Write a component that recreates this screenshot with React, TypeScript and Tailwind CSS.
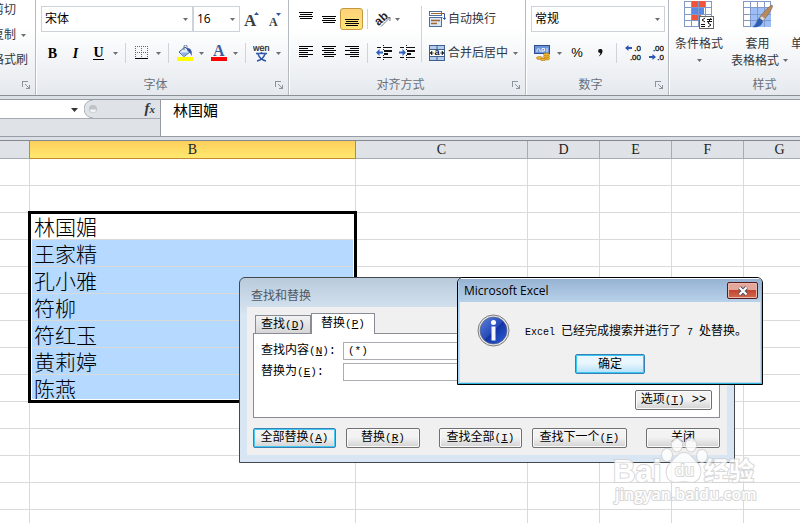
import React from "react";

const sans = "font-['Open_Sans','Noto_Sans_CJK_SC',sans-serif]";
const song = "font-['Liberation_Mono','Noto_Sans_CJK_SC',monospace]";

function Caret() {
  return (
    <svg width="5" height="3" viewBox="0 0 5 3" aria-hidden="true">
      <path d="M0 0h5L2.500 3z" fill="#6b6f75" />
    </svg>
  );
}

function ArrowButton({ label }: { label: string }) {
  return (
    <button aria-label={label} className="flex h-6 w-[11px] items-center justify-center">
      <Caret />
    </button>
  );
}

function Tool({ label, children }: { label: string; children: React.ReactNode }) {
  return (
    <button aria-label={label} className="flex h-6 w-[23px] shrink-0 items-center justify-center">
      {children}
    </button>
  );
}

function Sep() {
  return <span className="mx-1 h-5 w-px shrink-0 bg-[#d0d4da]" />;
}

function Combo({ label, value, width }: { label: string; value: string; width: string }) {
  return (
    <span className={"relative block " + width}>
      <select
        aria-label={label}
        defaultValue={value}
        className="h-[26px] w-full appearance-none border border-[#ced3d9] bg-white px-[3px] text-[12px] leading-6 text-black"
      >
        <option>{value}</option>
      </select>
      <span className="pointer-events-none absolute top-0 right-[5px] flex h-full items-center">
        <Caret />
      </span>
    </span>
  );
}

function Launcher({ label }: { label: string }) {
  return (
    <button aria-label={label} className="flex w-[18px] justify-center">
      <svg width="8" height="8" viewBox="0 0 8 8" fill="none" stroke="#8d939b" shapeRendering="crispEdges">
        <path d="M.5 6V.5H6M3 3l4 4M7.500 3.500v4h-4" />
      </svg>
    </button>
  );
}

function Group({
  title,
  className,
  launcher = true,
  children,
}: {
  title: string;
  className: string;
  launcher?: boolean;
  children: React.ReactNode;
}) {
  return (
    <section className={"flex shrink-0 flex-col border-r border-[#b5bac1] shadow-[1px_0_0_#ffffff] " + className}>
      <div className="h-[75px]">{children}</div>
      <div className="flex h-5 items-center text-[12px] leading-5 text-[#6a7079]">
        <span className="flex-1 text-center">{title}</span>
        {launcher && <Launcher label={title + "设置"} />}
      </div>
    </section>
  );
}

function Lines({ rows }: { rows: [number, number, number][] }) {
  return (
    <svg width="14" height="16" viewBox="0 0 14 16" shapeRendering="crispEdges">
      {rows.map(([x, y, w]) => (
        <rect key={y} x={x} y={y} width={w} height="1" fill="#000" />
      ))}
    </svg>
  );
}

function Indent({ flip }: { flip?: boolean }) {
  return (
    <svg width="16" height="16" viewBox="0 0 16 16" shapeRendering="crispEdges">
      <g fill="#111">
        <rect x="1" y="2" width="4" height="1" />
        <rect x="7" y="2" width="9" height="1" />
        <rect x="8" y="5" width="8" height="2" />
        <rect x="8" y="8" width="4" height="2" />
        <rect x="1" y="12" width="4" height="1" />
        <rect x="7" y="12" width="9" height="1" />
        <rect x="7" y="0" width="1" height="1" />
        <rect x="7" y="4" width="1" height="1" />
        <rect x="7" y="10" width="1" height="1" />
        <rect x="7" y="14" width="1" height="1" />
      </g>
      <path d={flip ? "M7 7.500L3.500 4v2.500H0v2h3.500V11z" : "M0 7.500L3.500 4v2.500H7v2H3.500V11z"} fill="#2f62c0" shapeRendering="auto" />
    </svg>
  );
}

function DecimalIcon({ more }: { more?: boolean }) {
  return (
    <svg width="16" height="18" viewBox="0 0 16 18">
      <g fontFamily="Liberation Sans, sans-serif" fontSize="8" fill="#111" stroke="#111" strokeWidth=".3">
        <text x="16" y="7" textAnchor="end">{more ? ".0" : ".00"}</text>
        <text x="16" y="16" textAnchor="end">{more ? ".00" : ".0"}</text>
      </g>
      {more ? (
        <path d="M0 4l3.500-3v2H7v2H3.500v2z" fill="#2b55b5" />
      ) : (
        <path d="M8 13l-3.500-3v2H1v2h3.500v2z" fill="#2b55b5" />
      )}
    </svg>
  );
}

function GridLines() {
  return <path d="M7.500 0v26M14.500 0v26M21.500 0v26M0 6.500h28M0 13.500h28M0 19.500h28" stroke="#8199c6" fill="none" />;
}

function Ribbon() {
  return (
    <header className="flex h-24 shrink-0 overflow-hidden border-b border-[#8b9097] bg-linear-to-b from-white from-30% to-[#e5e9ee] text-[12px] text-[#33373d]">
      <section className="flex w-9 shrink-0 flex-col border-r border-[#b5bac1] shadow-[1px_0_0_#ffffff]">
        <div className="-ml-2 flex h-[75px] flex-col items-start justify-between pt-[2px] pb-[7px] leading-4 whitespace-nowrap">
          <button>剪切</button>
          <button className="flex items-center gap-[5px]">
            复制 <Caret />
          </button>
          <button>格式刷</button>
        </div>
        <div className="flex h-5 items-center justify-end">
          <Launcher label="剪贴板设置" />
        </div>
      </section>

      <Group title="字体" className="w-[253px] pl-[5px]">
        <div className="flex flex-col gap-2 pt-[6px]">
          <div className="flex items-center">
            <Combo label="字体" value="宋体" width="w-[152px]" />
            <Combo label="字号" value="16" width="w-[47px]" />
            <Tool label="增大字号">
              <svg width="16" height="18" viewBox="0 0 16 18">
                <text x="0" y="16" fontFamily="Liberation Serif, serif" fontWeight="bold" fontSize="17" fill="#3b3f45">A</text>
                <path d="M10 5l2.500-3L15 5z" fill="#2f55a4" />
              </svg>
            </Tool>
            <Tool label="减小字号">
              <svg width="16" height="18" viewBox="0 0 16 18">
                <text x="2" y="16" fontFamily="Liberation Serif, serif" fontWeight="bold" fontSize="12" fill="#3b3f45">A</text>
                <path d="M9 3l2.500 3L14 3z" fill="#2f55a4" />
              </svg>
            </Tool>
          </div>
          <div className="flex h-[26px] items-center font-['Liberation_Serif',serif] text-[14px] text-black">
            <Tool label="加粗"><b>B</b></Tool>
            <Tool label="倾斜"><i className="font-bold">I</i></Tool>
            <Tool label="下划线"><b className="border-b border-black leading-[13px]">U</b></Tool>
            <ArrowButton label="下划线选项" />
            <Sep />
            <Tool label="边框">
              <svg width="14" height="14" viewBox="0 0 14 14" shapeRendering="crispEdges">
                <path d="M.5 0v12M6.500 0v12M12.500 0v12M0 .5h13M0 6.500h13" stroke="#666" strokeDasharray="1 1" fill="none" />
                <path d="M0 12.500h13" stroke="#000" />
              </svg>
            </Tool>
            <ArrowButton label="边框选项" />
            <Sep />
            <Tool label="填充颜色">
              <svg width="16" height="16" viewBox="0 0 16 16">
                <path d="M2 7l6-5 5 5-6 4.500z" fill="#dfe9f8" stroke="#3d5c98" />
                <path d="M7 5V1.500a1.500 1.500 0 0 1 3 0V4" fill="none" stroke="#5c6f92" />
                <path d="M4 7.500h8L7 11z" fill="#8fb2e6" />
                <path d="M10 3c4 0 5.500 3 4.500 8-1-2-1-4-4-5z" fill="#2f55a4" />
                <path d="M0 12h16v4H0z" fill="#ffff00" />
              </svg>
            </Tool>
            <ArrowButton label="填充颜色选项" />
            <Tool label="字体颜色">
              <svg width="16" height="16" viewBox="0 0 16 16">
                <text x="2" y="11" fontFamily="Liberation Serif, serif" fontWeight="bold" fontSize="16" fill="#3c5c9c">A</text>
                <path d="M0 12h16v4H0z" fill="#ff0000" />
              </svg>
            </Tool>
            <ArrowButton label="字体颜色选项" />
            <Sep />
            <Tool label="拼音指南">
              <svg width="17" height="17" viewBox="0 0 17 17">
                <text x="0" y="6" fontFamily="Liberation Sans, sans-serif" fontSize="9" fill="#222" stroke="#222" strokeWidth=".2">wén</text>
                <path d="M3 8.500h11M8.500 7v2M5 9c1 3 4 6 8 7M12 9c-1 3-4 6-8 7" stroke="#3157a8" strokeWidth="1.500" fill="none" />
              </svg>
            </Tool>
            <ArrowButton label="拼音指南选项" />
          </div>
        </div>
      </Group>

      <Group title="对齐方式" className="w-[237px] pl-[5px]">
        <div className="flex pt-[6px]">
          <div className="flex flex-col gap-2">
            <div className="flex h-[26px] items-center">
              <Tool label="顶端对齐"><Lines rows={[[0, 1, 14], [1, 3, 12], [0, 5, 14], [1, 7, 12]]} /></Tool>
              <Tool label="垂直居中"><Lines rows={[[0, 5, 14], [1, 7, 12], [0, 9, 14], [1, 11, 12]]} /></Tool>
              <button aria-label="底端对齐" aria-pressed="true" className="flex h-[22px] w-[23px] items-center justify-center rounded-[3px] border border-[#c29a3d] bg-linear-to-b from-[#fdd27a] to-[#ffe577]">
                <Lines rows={[[0, 8, 14], [1, 10, 12], [0, 12, 14], [1, 14, 12]]} />
              </button>
              <Sep />
              <button aria-label="方向" className="flex w-5 justify-end">
                <svg width="17" height="16" viewBox="0 0 17 16">
                  <text x="0" y="12" transform="rotate(-42 6 9)" fontFamily="Liberation Sans, sans-serif" fontWeight="bold" fontSize="12" fill="#222">ab</text>
                  <path d="M6 15.500l9-9M11.500 6.500H15V10" stroke="#777" fill="none" />
                </svg>
              </button>
              <ArrowButton label="方向选项" />
            </div>
            <div className="flex h-[26px] items-center">
              <Tool label="左对齐"><Lines rows={[[0, 1, 14], [0, 3, 9], [0, 5, 14], [0, 7, 9], [0, 9, 14], [0, 11, 9]]} /></Tool>
              <Tool label="居中"><Lines rows={[[0, 1, 14], [2, 3, 10], [0, 5, 14], [2, 7, 10], [0, 9, 14], [2, 11, 10]]} /></Tool>
              <Tool label="右对齐"><Lines rows={[[0, 1, 14], [5, 3, 9], [0, 5, 14], [5, 7, 9], [0, 9, 14], [5, 11, 9]]} /></Tool>
              <Sep />
              <Tool label="减少缩进量"><Indent /></Tool>
              <Tool label="增加缩进量"><Indent flip /></Tool>
            </div>
          </div>
          <span className="mr-[7px] ml-[3px] h-14 w-px bg-[#d0d4da]" />
          <div className="flex flex-col gap-2">
            <button className="flex h-[26px] items-center gap-[2px]">
              <svg width="17" height="16" viewBox="0 0 17 16">
                <rect x=".5" y=".5" width="12" height="4" fill="#fff" stroke="#4d6d9a" />
                <path d="M2 2.500h12" stroke="#a5642b" />
                <rect x=".5" y="6.500" width="12" height="9" fill="#dbe7f6" stroke="#4d6d9a" />
                <path d="M2 9.500h9M2 12.500h6" stroke="#a5642b" strokeWidth="1.500" />
                <path d="M14 2.500h1.500V8M13.500 6.500l2 2 1.500-2" stroke="#2f55a4" fill="none" />
              </svg>
              自动换行
            </button>
            <button className="flex h-[26px] items-center gap-[2px]">
              <svg width="17" height="16" viewBox="0 0 17 16">
                <rect x=".5" y=".5" width="15" height="15" fill="#b5cdec" stroke="#3f5f8d" />
                <path d="M8 0v4M8 12v4M0 4.500h16M0 11.500h16" stroke="#3f5f8d" />
                <rect x="1" y="5" width="14" height="6" fill="#fff" />
                <text x="8" y="10" textAnchor="middle" fontFamily="Liberation Sans, sans-serif" fontWeight="bold" fontSize="9" fill="#111">a</text>
                <path d="M1 8l2-2v4zM15 8l-2-2v4zM3 8h2M11 8h2" fill="#222" stroke="#222" strokeWidth=".6" />
              </svg>
              合并后居中
              <span className="ml-[3px]"><Caret /></span>
            </button>
          </div>
        </div>
      </Group>

      <Group title="数字" className="w-[143px] pl-[5px]">
        <div className="flex flex-col gap-2 pt-[6px]">
          <Combo label="数字格式" value="常规" width="w-[134px]" />
          <div className="flex h-[26px] items-center text-black">
            <Tool label="会计数字格式">
              <svg width="17" height="16" viewBox="0 0 17 16">
                <rect x=".5" y=".5" width="15" height="8" fill="#6b93d8" stroke="#2c4d92" />
                <path d="M3 7V4.500a2 2 0 0 1 3 0V7M8 7V3.500h2.500V6H8M13 3v4" stroke="#e8f0fc" fill="none" />
                <g fill="#f0b62c" stroke="#a9741a" strokeWidth=".6">
                  <ellipse cx="12.500" cy="13.500" rx="3" ry="1.500" />
                  <ellipse cx="12.500" cy="11.500" rx="3" ry="1.500" />
                  <ellipse cx="12.500" cy="9.500" rx="3" ry="1.500" />
                  <ellipse cx="5.500" cy="13" rx="3" ry="1.500" />
                  <ellipse cx="9" cy="14.500" rx="2.500" ry="1.200" />
                </g>
              </svg>
            </Tool>
            <ArrowButton label="会计数字格式选项" />
            <button className="w-6 font-['Liberation_Sans',sans-serif] text-[13px]">%</button>
            <button aria-label="千位分隔样式" className="flex w-[23px] justify-center">
              <svg width="5" height="8" viewBox="0 0 5 8">
                <path d="M2 0a2 2 0 0 1 2.500 2C4.500 4.500 3 6.500.5 7.500 2 6 2.500 5 2.200 4A2 2 0 0 1 2 0z" fill="#111" />
              </svg>
            </button>
            <Sep />
            <Tool label="增加小数位数"><DecimalIcon more /></Tool>
            <Tool label="减少小数位数"><DecimalIcon /></Tool>
          </div>
        </div>
      </Group>

      <Group title="样式" className="w-[192px]" launcher={false}>
        <div className="flex leading-[17px]">
          <button className="flex w-[60px] flex-col items-center whitespace-nowrap">
            <svg width="30" height="35" viewBox="0 -1 30 35">
              <rect x=".5" y=".5" width="27" height="25" fill="#fff" stroke="#8199c6" />
              <path d="M8 0h6v6H8zM8 13h9v6H8zM15 0h6v6h-6z" fill="#f0553c" />
              <path d="M8 7h12v6H8z" fill="#5a8ae6" />
              <GridLines />
              <rect x="15.500" y="15.500" width="14" height="12" fill="#fff" stroke="#666" />
              <path d="M21 17l-3 2 3 2M17 23.500h4M17 25.500h4M23 18.500h5M23 20.500h5M27 17l-3 5M24 22l3 2-3 2" stroke="#111" fill="none" />
            </svg>
            <span>条件格式</span>
            <span className="flex h-[17px] items-center"><Caret /></span>
          </button>
          <button className="flex w-[57px] flex-col items-center whitespace-nowrap">
            <svg width="30" height="35" viewBox="0 -1 30 35">
              <rect x=".5" y=".5" width="27" height="25" fill="#fff" stroke="#8199c6" />
              <path d="M7 7h21v19H7z" fill="#9dbef6" />
              <GridLines />
              <path d="M29 4c2 2-4 10-9 16l-4-3C21 11 26 5 29 4z" fill="#b98a5c" stroke="#7d5a38" strokeWidth=".6" />
              <path d="M19 15l3 2.500-2 2.500-3.500-3z" fill="#dcdcdc" stroke="#888" strokeWidth=".5" />
              <path d="M16 17l4 3c-1 5-5 7-11 6 4-1 4-6 7-9z" fill="#2f5eb0" />
            </svg>
            <span>套用</span>
            <span className="flex items-center gap-1 pl-1">表格格式 <Caret /></span>
          </button>
          <button className="flex flex-col pt-[35px] pl-[5px] whitespace-nowrap">单</button>
        </div>
      </Group>
    </header>
  );
}

function FormulaBar() {
  return (
    <div className="mt-[3px] flex h-[38px] shrink-0 border-y border-[#979ca4] bg-[#dfe2e6]">
      <div className="flex h-[19px] w-40 border-b border-[#a6abb3]">
        <div className="relative w-[84px] bg-white">
          <input aria-label="名称框" className="h-[18px] w-full bg-transparent px-1 text-[12px] outline-none" />
          <svg className="absolute top-[8px] right-[6px]" width="7" height="4" viewBox="0 0 7 4">
            <path d="M0 0h7L3.500 4z" fill="#333" />
          </svg>
        </div>
        <svg width="20" height="18" viewBox="0 0 20 18">
          <path d="M0 0h9a9 9 0 0 0 0 18H0z" fill="#fff" />
          <path d="M9 0a9 9 0 0 0 0 18" fill="none" stroke="#a9aeb5" />
          <circle cx="9" cy="9" r="4" fill="#bfc3c8" />
          <path d="M6 9.500h6a3 3 0 0 1-6 0z" fill="#f3f4f6" />
        </svg>
        <button className="ml-auto pr-[5px] font-['Liberation_Serif',serif] text-[15px] leading-[17px] font-bold text-[#33373c] italic">
          f<span className="text-[11px]">x</span>
        </button>
      </div>
      <input
        aria-label="编辑栏"
        defaultValue="林国媚"
        className="h-full flex-1 border-l border-[#979ca4] bg-white pb-[18px] pl-3 text-[15px] leading-[18px] text-black outline-none"
      />
    </div>
  );
}

const columns = ["B", "C", "D", "E", "F", "G"];
const names = ["林国媚", "王家精", "孔小雅", "符柳", "符红玉", "黄莉婷", "陈燕"];
const rows = ["", "", ...names, "", "", "", "", ""];

function Sheet() {
  return (
    <main className="relative mt-[3px] flex-1 overflow-hidden border-t border-[#85898f] bg-white">
      <table className="w-full min-w-[816px] table-fixed border-separate border-spacing-0">
        <colgroup>
          <col className="w-[30px]" />
          <col className="w-[326px]" />
          <col className="w-[172px]" />
          <col className="w-[72px]" />
          <col className="w-[72px]" />
          <col className="w-[72px]" />
          <col className="w-[72px]" />
          <col />
        </colgroup>
        <thead>
          <tr className="h-[18px] bg-[#dfe2e6] font-['Liberation_Serif',serif] text-[14px] leading-[17px] text-[#222]">
            <td className="border-r border-b border-r-[#c28a2c] border-b-[#a7acb4] p-0" />
            {columns.map((c) => (
              <th
                key={c}
                scope="col"
                className={
                  c === "B"
                    ? "border-r border-b border-[#c28a2c] bg-linear-to-b from-[#fdcf5c] to-[#fee96f] p-0 font-normal"
                    : "border-r border-b border-[#a7acb4] p-0 font-normal"
                }
              >
                {c}
              </th>
            ))}
            <td className="border-b border-[#a7acb4] p-0" />
          </tr>
        </thead>
        <tbody>
          {rows.map((name, r) => (
            <tr key={r} className="h-[27px]">
              <td className="border-r border-b border-[#d9dadc] p-0" />
              <td
                className={
                  "border-r border-b border-[#d9dadc] pt-[2px] pr-0 pb-0 pl-1 text-[21px] leading-[24px] font-light text-black " +
                  (r > 2 && r < 9 ? "bg-[#b5d9ff]" : "")
                }
              >
                {name}
              </td>
              <td className="border-r border-b border-[#d9dadc] p-0" />
              <td className="border-r border-b border-[#d9dadc] p-0" />
              <td className="border-r border-b border-[#d9dadc] p-0" />
              <td className="border-r border-b border-[#d9dadc] p-0" />
              <td className="border-r border-b border-[#d9dadc] p-0" />
              <td className="border-b border-[#d9dadc] p-0" />
            </tr>
          ))}
        </tbody>
      </table>
      <div className="pointer-events-none absolute top-[70px] left-7 h-48 w-[329px] border-[3px] border-black shadow-[inset_0_0_0_1px_#ffffff]" />
    </main>
  );
}

function Key({ k }: { k: string }) {
  return (
    <span className="text-[11px] leading-none">
      (<u>{k}</u>)
    </span>
  );
}

function DialogButton({ width, primary, children }: { width: string; primary?: boolean; children: React.ReactNode }) {
  return (
    <button
      className={
        "h-5 rounded-[2px] border bg-linear-to-b from-[#f3f3f3] from-45% to-[#d2d2d2] text-[12px] leading-[18px] whitespace-nowrap text-black " +
        (primary ? "border-[#3c7fb1] shadow-[inset_0_0_0_1px_#45c8f3] " : "border-[#707070] shadow-[inset_0_0_0_1px_#fafafa] ") +
        width
      }
    >
      {children}
    </button>
  );
}

function FindDialog() {
  return (
    <section
      aria-label="查找和替换"
      className="absolute top-[277px] left-[239px] w-[496px] rounded-t-[6px] border border-[#44484d] bg-linear-to-b from-[#b9cbdc] to-[#d8e5f2] to-20% px-[7px] pb-[7px]"
    >
      <h2 className="h-[29px] pt-[9px] pl-1 text-[12px] leading-[18px] text-[#50575f]">查找和替换</h2>
      <div className={"bg-[#f0f0f0] px-[6px] pt-[6px] pb-[7px] text-[12px] text-black " + song}>
        <div role="tablist" className="flex h-5 items-end pl-[2px]">
          <button role="tab" className="h-[18px] w-14 border border-b-0 border-[#898c95] bg-linear-to-b from-[#f2f2f2] to-[#d6d6d6] leading-[18px] whitespace-nowrap">
            查找<Key k="D" />
          </button>
          <button role="tab" aria-selected="true" className="relative z-10 -mb-px h-[21px] w-16 border border-b-0 border-[#898c95] bg-white leading-[20px] whitespace-nowrap">
            替换<Key k="P" />
          </button>
        </div>
        <div className="mr-px flex flex-col gap-[3px] border border-[#898c95] bg-white px-[7px] pt-2 pb-[7px]">
          <div className="flex h-[18px] items-center">
            <label htmlFor="find" className="w-[82px] leading-[18px]">
              查找内容<Key k="N" />:
            </label>
            <input id="find" defaultValue="(*)" className="h-[18px] flex-1 border border-[#abadb3] bg-white pl-1 text-[11px]" />
          </div>
          <div className="flex h-[18px] items-center">
            <label htmlFor="repl" className="w-[82px] leading-[18px]">
              替换为<Key k="E" />:
            </label>
            <input id="repl" className="h-[18px] flex-1 border border-[#abadb3] bg-white pl-1 text-[11px]" />
          </div>
          <div className="flex h-[26px] items-end justify-end">
            <DialogButton width="w-[77px]">
              选项<Key k="T" /> &gt;&gt;
            </DialogButton>
          </div>
        </div>
        <div className="flex h-[30px] items-end">
          <DialogButton width="w-[83px]" primary>全部替换<Key k="A" /></DialogButton>
          <DialogButton width="ml-[10px] w-[74px]">替换<Key k="R" /></DialogButton>
          <DialogButton width="ml-[19px] w-[83px]">查找全部<Key k="I" /></DialogButton>
          <DialogButton width="ml-[10px] w-[95px]">查找下一个<Key k="F" /></DialogButton>
          <DialogButton width="ml-[19px] w-[74px]">关闭</DialogButton>
        </div>
      </div>
    </section>
  );
}

function Alert() {
  return (
    <section
      role="alertdialog"
      aria-label="Microsoft Excel"
      className="absolute top-[277px] left-[457px] w-[306px] overflow-hidden rounded-t-[6px] border border-black bg-[#f0f0f0]"
    >
      <div className="border border-t-white border-r-[#4cc8ee] border-b-[#2fb4dc] border-l-[#a9d3ee] shadow-[inset_0_0_0_1px_#c5d9ee]">
        <div className="flex h-[23px] items-center justify-between bg-linear-to-b from-[#96b3d3] to-[#b9d1ea] pr-[3px] pl-[5px]">
          <h2 className="text-[12px] leading-5 text-black">Microsoft Excel</h2>
          <button
            aria-label="关闭"
            className="flex h-[17px] w-[31px] items-center justify-center rounded-[2px] border border-[#5a1b20] bg-linear-to-b from-[#e3a79b] from-45% via-[#c2452f] via-50% to-[#cf6a4e] shadow-[inset_0_0_0_1px_#eab9ac]"
          >
            <svg width="12" height="10" viewBox="0 0 12 10">
              <path d="M2.500 1.500l7 7M9.500 1.500l-7 7" stroke="#4c5260" strokeWidth="4" />
              <path d="M2.500 1.500l7 7M9.500 1.500l-7 7" stroke="#fff" strokeWidth="2.200" />
            </svg>
          </button>
        </div>
        <div className="flex h-[45px] items-end gap-[15px] pl-[18px]">
          <svg width="33" height="33" viewBox="0 0 33 33">
            <defs>
              <linearGradient id="info" x1="0" y1="0" x2="1" y2="1">
                <stop offset="0" stopColor="#5f83dd" />
                <stop offset=".5" stopColor="#2549b8" />
                <stop offset=".52" stopColor="#1433a4" />
                <stop offset="1" stopColor="#2c62dc" />
              </linearGradient>
            </defs>
            <circle cx="16.500" cy="16.500" r="15.500" fill="#e9e9e9" stroke="#777" />
            <circle cx="16.500" cy="16.500" r="13.500" fill="url(#info)" stroke="#5b6685" strokeWidth=".7" />
            <circle cx="16.500" cy="8.500" r="2.500" fill="#fff" />
            <path d="M14.500 12.500h4v14h-4z" fill="#f4f6fb" />
          </svg>
          <p className={"pb-[5px] text-[12px] leading-[18px] whitespace-nowrap text-black " + song}>
            <span className="text-[10px]">Excel </span>已经完成搜索并进行了<span className="text-[10px]"> 7 </span>处替换。
          </p>
        </div>
        <div className="flex justify-center pt-[7px] pb-[9px]">
          <button className="h-5 w-[70px] rounded-[2px] border border-[#3c7fb1] bg-linear-to-b from-[#eaf6fd] from-45% to-[#b4e0f8] text-[12px] leading-[18px] text-black shadow-[inset_0_0_0_1px_#35c8f6]">
            确定
          </button>
        </div>
      </div>
    </section>
  );
}

function Watermark() {
  return (
    <svg
      className="pointer-events-none absolute top-[436px] left-[610px]"
      width="150"
      height="76"
      viewBox="0 0 150 76"
      fill="#fff"
      stroke="#d2d2d2"
      strokeWidth="2"
      opacity=".85"
      paintOrder="stroke"
    >
      <text x="3" y="46" fontFamily="Liberation Sans, sans-serif" fontWeight="bold" fontSize="31">Bai</text>
      <ellipse cx="57" cy="19" rx="5" ry="6" />
      <ellipse cx="67" cy="9" rx="5" ry="6.500" />
      <ellipse cx="81" cy="9" rx="5" ry="6.500" />
      <ellipse cx="92" cy="20" rx="5" ry="6" />
      <path d="M74 17c6 0 8 5 13 10 6 6 4 19-6 19-3 0-5-1-7-1s-5 1-8 1c-10 0-12-12-6-18 5-5 8-11 14-11z" />
      <text x="65" y="40" fontFamily="Liberation Sans, sans-serif" fontSize="17">du</text>
      <text x="94" y="44" fontFamily="Noto Sans CJK SC, sans-serif" fontWeight="bold" fontSize="25">经验</text>
      <text x="5" y="64" fontFamily="Open Sans, sans-serif" fontWeight="600" fontSize="16">jingyan.baidu.com</text>
    </svg>
  );
}

export default function App() {
  return (
    <div className={"relative flex h-screen w-full flex-col overflow-hidden bg-[#dbdfe6] " + sans}>
      <Ribbon />
      <FormulaBar />
      <Sheet />
      <FindDialog />
      <Alert />
      <Watermark />
    </div>
  );
}
